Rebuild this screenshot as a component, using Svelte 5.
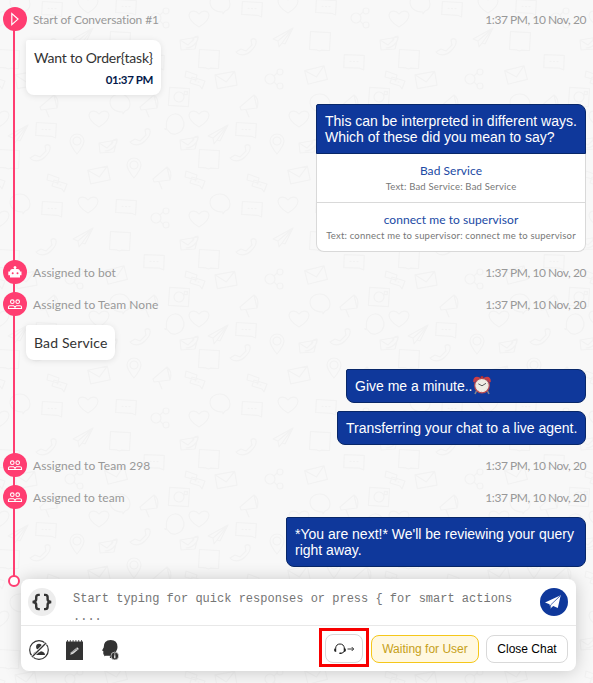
<script>
  const stamp = '1:37 PM, 10 Nov, 20';

  const timeline = [
    { kind: 'event', icon: 'play', label: 'Start of Conversation #1', top: 7, ls: -0.12 },
    { kind: 'in', text: 'Want to Order{task}', time: '01:37 PM', top: 9, width: 135, ls: -0.22 },
    {
      kind: 'out',
      lines: ['This can be interpreted in different ways.', 'Which of these did you mean to say?'],
      options: [
        { title: 'Bad Service', detail: 'Text: Bad Service: Bad Service' },
        { title: 'connect me to supervisor', detail: 'Text: connect me to supervisor: connect me to supervisor' }
      ],
      top: 9,
      width: 270
    },
    { kind: 'event', icon: 'bot', label: 'Assigned to bot', top: 8, ls: 0.03 },
    { kind: 'event', icon: 'team', label: 'Assigned to Team None', top: 8, ls: 0.07 },
    { kind: 'in', text: 'Bad Service', top: 9, width: 89, ls: 0.15 },
    { kind: 'out', lines: ['Give me a minute..'], clock: true, top: 9, width: 240 },
    { kind: 'out', lines: ['Transferring your chat to a live agent.'], top: 8, width: 249 },
    { kind: 'event', icon: 'team', label: 'Assigned to Team 298', top: 8, ls: 0.07 },
    { kind: 'event', icon: 'team', label: 'Assigned to team', top: 8, ls: 0.03 },
    { kind: 'out', lines: ["*You are next!* We'll be reviewing your query", 'right away.'], top: 8, width: 300 }
  ];

  // Wallpaper doodles: shape, centre x, centre y, rotation inside a 200px tile
  const doodles = [
    ['bubble', 4, 5, 0], ['horn', 33, 6, 0], ['camera', 63, 199, 4], ['horn', 133, 6, 0],
    ['heart', 83, 21, 0], ['bubble', 59, 26, 80], ['plane', 103, 36, 0], ['chat', 130, 32, 3],
    ['heart', 183, 21, 0], ['phone', 24, 39, 0], ['openmail', 73, 46, 0], ['phone', 124, 55, 0],
    ['pin', 161, 46, 0], ['openmail', 192, 49, 0], ['pin', 18, 70, 0], ['horn', 46, 78, 0],
    ['note', 93, 61, 3], ['double', 79, 82, 0], ['double', 141, 85, 0], ['mail', 183, 77, -12],
    ['bubble', 104, 105, 0], ['chat', 10, 109, 3], ['chat', 136, 111, 3], ['heart', 172, 107, 0],
    ['share', 44, 120, 0], ['heart', 83, 121, 0], ['note', 4, 143, 3], ['openmail', 73, 146, 0],
    ['phone', 130, 149, 0], ['plane', 168, 139, 0], ['chat', 38, 164, 2], ['note', 93, 161, 3],
    ['double', 79, 182, 0], ['mail', 110, 182, -10], ['mail', 0, 177, -14], ['share', 158, 181, 0]
  ];

  const shapes = {
    bubble: 'M3 9C-5 9-10 5-10-1C-10-6-5-9 0-9C6-9 10-4 10 1C10 4 8 7 5 8L3 11Z',
    horn: 'M-9 3L5-9L8 4L-8 6ZM-3 6L0 13M5-9C9-6 10-2 8 4',
    camera: 'M-10-9H10V9H-10ZM5-6H8V-3H5ZM5 0A5 5 0 1 1-5 0A5 5 0 1 1 5 0Z',
    heart: 'M0 8C-5 5-10 0-10-4C-9-9-3-9 0-5C3-9 9-9 10-4C10 0 5 5 0 8Z',
    plane: 'M9-9L-11 2L-6 4L-5 10L-2 6L1 7ZM-6 4L9-9L-2 6',
    chat: 'M-10-7H10V7.5L6 6H-10Z M-4-.5H-3M-.5-.5H.5M3-.5H4',
    phone: 'M-10 5C-7 9 0 9 5 4C9 0 11-4 10-7C8-9 6-8 5-7L6-2L0 4L-5 2Z',
    openmail: 'M-9-4L3-6L9-7L6 5L-8 6ZM-9-4L-1 1L5-5M-3 4C5 4 10-4 9-8C6-8 3-6 4-3',
    pin: 'M0 10C-4 5-7 1-7-3A7 7 0 0 1 7-3C7 1 4 5 0 10ZM4-3A4 4 0 1 1-4-3A4 4 0 1 1 4-3Z',
    note: 'M-10-9H10V9H2L0 10L-3 9H-10Z',
    double: 'M-9-9L2-5L1 0L-10-3ZM-3-3L10 1L7 9L5 6L-5 3ZM0 1H1M3 2H4',
    mail: 'M-10-7H10V7H-10ZM-10-7L0 2L10-7',
    share: 'M1 0A5 5 0 1 1-9 0A5 5 0 1 1 1 0ZM9-7A3 3 0 1 1 3-7A3 3 0 1 1 9-7ZM9 7A3 3 0 1 1 3 7A3 3 0 1 1 9 7ZM0-3L3-6M0 3L3 6'
  };

  // Shapes near a tile edge are repeated on the far side so the tile is seamless
  const tile = doodles.flatMap(([shape, x, y, r]) => {
    const xs = x < 14 ? [x, x + 200] : x > 186 ? [x, x - 200] : [x];
    const ys = y < 14 ? [y, y + 200] : y > 186 ? [y, y - 200] : [y];
    return xs.flatMap((px) => ys.map((py) => ({ d: shapes[shape], t: `translate(${px} ${py}) rotate(${r})` })));
  });
</script>

<div class="screen">
  <svg class="wallpaper" width="593" height="683" aria-hidden="true">
    <defs>
      <pattern id="doodles" x="116" y="98" width="200" height="200" patternUnits="userSpaceOnUse">
        {#each tile as s}
          <path d={s.d} transform={s.t} fill="none" stroke="#f2f2f2" stroke-width="1.2" stroke-linejoin="round" stroke-linecap="round" />
        {/each}
      </pattern>
    </defs>
    <rect width="593" height="683" fill="url(#doodles)" />
  </svg>

  <main class="feed">
    <div class="rail"></div>
    {#each timeline as item}
      {#if item.kind === 'event'}
        <div class="event" style="margin-top: {item.top}px">
          <span class="badge">
            {#if item.icon === 'play'}
              <svg width="24" height="24" viewBox="0 0 24 24"><path d="M8.800 6.500V17.700L15 12.100Z" fill="none" stroke="#fff" stroke-width="1.200" /></svg>
            {:else if item.icon === 'bot'}
              <svg width="24" height="24" viewBox="0 0 24 24">
                <path d="M11.400 9V6.600H12.600V9H14.500Q17 9 17 11.500H18.500V15.200H17V17.500H7V15.200H5.300V11.500H7Q7 9 9.500 9Z" fill="#fff" />
                <circle cx="12" cy="7.600" r="1.400" fill="#fff" />
                <circle cx="9.700" cy="13.300" r="1" fill="#ff3d71" /><circle cx="14.500" cy="13.300" r="1" fill="#ff3d71" />
              </svg>
            {:else}
              <svg width="24" height="24" viewBox="0 0 24 24" fill="none" stroke="#fff" stroke-width="1.100">
                <circle cx="9.300" cy="9.700" r="1.800" /><circle cx="14.700" cy="9.700" r="1.800" />
                <path d="M5.500 16.500V15Q5.500 13.700 7 13.700H10.500L12 15L13.500 13.700H17Q18.500 13.700 18.500 15V16.500ZM12 14.500V16.500" />
              </svg>
            {/if}
          </span>
          <span class="label" style="letter-spacing: {item.ls}px">{item.label}</span>
          <time>{stamp}</time>
        </div>
      {:else if item.kind === 'in'}
        <div class="incoming" style="margin-top: {item.top}px; width: {item.width}px">
          <p style="letter-spacing: {item.ls}px">{item.text}</p>
          {#if item.time}<time>{item.time}</time>{/if}
        </div>
      {:else}
        <div class="outgoing" class:with-options={item.options} style="margin-top: {item.top}px; width: {item.width}px">
          <div class="bubble">
            {#each item.lines as line}
              <p>{line}{#if item.clock}<svg class="clock" width="18" height="19" viewBox="0 0 18 19" role="img" aria-label="alarm clock">
                    <path d="M4 14L2 18M14 14L16 18" stroke="#82868b" stroke-width="1.6" />
                    <path d="M.3 6Q-.2 1 4 .7Q6.500 .8 7.500 2.200Q3 3.200 1.500 6.500ZM17.700 6Q18.200 1 14 .7Q11.500 .8 10.500 2.200Q15 3.200 16.500 6.500Z" fill="#cf3d44" />
                    <path d="M8 2V.4H10V2" stroke="#a22d35" fill="#df3843" />
                    <circle cx="9" cy="9.600" r="7.300" fill="#f0ece4" stroke="#b9484c" stroke-width="1.200" />
                    <circle cx="9" cy="9.600" r="6" fill="none" stroke="#b7b1a8" stroke-width=".8" stroke-dasharray=".6 2.540" />
                    <path d="M5.300 7.800L9 9.800L13 7.300" fill="none" stroke="#37393c" stroke-width=".8" />
                  </svg>{/if}</p>
            {/each}
          </div>
          {#each item.options ?? [] as option}
            <div class="option">
              <span class="title">{option.title}</span>
              <span class="detail">{option.detail}</span>
            </div>
          {/each}
        </div>
      {/if}
    {/each}
    <span class="rail-end"></span>
  </main>

  <section class="composer">
    <div class="entry">
      <span class="braces">
        <svg width="28" height="28" viewBox="0 0 28 28" fill="none" stroke="#333" stroke-width="2.400">
          <path d="M11.800 6.900H10.500Q8.200 6.900 8.200 9.200V11.300Q8.200 13.700 4.600 14Q8.200 14.300 8.200 16.700V18.800Q8.200 21.100 10.500 21.100H11.800M16 6.900H17.300Q19.600 6.900 19.600 9.200V11.300Q19.600 13.700 23.200 14Q19.600 14.300 19.600 16.700V18.800Q19.600 21.100 17.300 21.100H16" />
        </svg>
      </span>
      <p class="prompt">Start typing for quick responses or press &#123; for smart actions<br />....</p>
      <span class="send">
        <svg width="28" height="28" viewBox="0 0 28 28">
          <path d="M20.700 7.200L5 14.500L9.500 16.300ZM20.700 7.200L10.500 16.800V20.600L13.200 17.900L17.800 19.900ZM20.700 7.200L9.500 16.300L10.500 20.600Z" fill="#fff" />
          <path d="M20 8L10.600 17V20" fill="none" stroke="#0f389b" stroke-width=".7" />
        </svg>
      </span>
    </div>

    <div class="tools">
      <svg class="tool" width="20" height="20" viewBox="0 0 20 20">
        <circle cx="10" cy="10" r="9.300" fill="none" stroke="#333" stroke-width="1.200" />
        <circle cx="10" cy="6.700" r="2.900" fill="#333" />
        <path d="M4 15Q4.200 11.800 8 11.200L10 12.500L12 11.200Q15.800 11.800 16 15Z" fill="#333" />
        <path d="M3.200 16.800L16.800 3.200" stroke="#fff" stroke-width="3" />
        <path d="M3.200 16.800L16.800 3.200" stroke="#333" stroke-width="1.300" />
      </svg>
      <svg class="tool pad" width="17" height="20" viewBox="0 0 17 20">
        <path d="M0 1.500H17V20H0Z" fill="#333" />
        <path d="M1.500 0V2M4.300 0V2M7.100 0V2M9.900 0V2M12.700 0V2M15.500 0V2" stroke="#333" stroke-width=".8" />
        <path d="M4.200 14.700L5.100 12.300L11.200 7.300L12.900 9L6.900 13.900Z" fill="#d7d7d7" /><path d="M10 8.200L11.700 10M5.500 12.500L11 8.800" stroke="#333" stroke-width=".4" />
      </svg>
      <svg class="tool head" width="17" height="20" viewBox="0 0 17 20">
        <path d="M2.200 16.500V14.800Q1.300 14.900 1.300 13.800V11L0 10.400L1.700 7.500Q1.500 .2 8.700 0Q15.500 .2 15.500 6.900Q15.500 9.300 14.300 11L12 18H7.900V15.800H3.700Q2.200 15.800 2.200 16.500Z" fill="#333" />
        <circle cx="12.800" cy="16" r="3.900" fill="#333" stroke="#fff" stroke-width=".6" />
        <path d="M12.800 13.600V14.600M12.800 15.300V18.200" stroke="#fff" stroke-width="1.200" />
      </svg>

      <div class="actions">
        <button class="transfer" aria-label="Transfer">
          <svg width="22" height="12" viewBox="0 0 22 12">
            <path d="M2.600 5.200Q3.200 1 7 1Q10.800 1 11.400 5.200V7.800Q11 10 7.800 10.400" fill="none" stroke="#222" stroke-width="1" />
            <path d="M3.200 5V9Q1 9 1 7Q1 5 3.200 5ZM10.800 5V9Q13 9 13 7Q13 5 10.800 5Z" fill="#222" />
            <rect x="6.200" y="9.600" width="2.300" height="1.400" rx=".7" fill="#222" />
            <path d="M14.500 6H20.500M18.700 4L20.700 6L18.700 8" fill="none" stroke="#222" stroke-width=".9" />
          </svg>
          <span class="highlight"></span>
        </button>
        <button class="waiting">Waiting for User</button>
        <button class="close">Close Chat</button>
      </div>
    </div>
  </section>
</div>

<style>
  :global(body) { background: #f8f8f8; }
  .screen {
    position: relative;
    width: 593px;
    height: 683px;
    overflow: hidden;
    background: #f8f8f8;
    font-family: Lato, 'Liberation Sans', sans-serif;
    display: flex;
    flex-direction: column;
  }
  .screen * { box-sizing: border-box; }
  p { margin: 0; white-space: nowrap; }
  .wallpaper { position: absolute; left: 0; top: 0; }
  .feed {
    position: relative;
    height: 579px;
    flex: none;
    padding: 0 7px 0 3px;
    display: flex;
    flex-direction: column;
  }
  .rail { position: absolute; left: 13px; top: 19px; width: 2px; height: 557px; background: #ff3d71; }
  .rail-end {
    position: absolute;
    left: 8px;
    top: 575px;
    width: 12px;
    height: 12px;
    border: 2px solid #ff3d71;
    border-radius: 50%;
    background: #fff;
    z-index: 3;
  }
  .event { display: flex; align-items: center; height: 24px; font-size: 12px; color: #989898; position: relative; flex: none; }
  .badge { width: 24px; height: 24px; border-radius: 50%; background: #ff3d71; flex: none; }
  .badge svg { display: block; }
  .label { margin-left: 6px; padding-top: 1px; }
  .event time { margin-left: auto; padding-top: 1px; letter-spacing: -0.45px; }
  .incoming {
    margin-left: 23px;
    padding: 8px 8px 7px;
    border-radius: 2px 8px 8px 8px;
    background: #fff;
    box-shadow: 0 1px 6px rgba(0, 0, 0, 0.1);
    font-size: 14px;
    line-height: 19px;
    color: #333;
    position: relative;
    flex: none;
    min-height: 35px;
  }
  .incoming time { display: block; text-align: right; font-size: 11.5px; font-weight: 700; color: #04194a; letter-spacing: -0.4px; line-height: 16px; margin-top: 5px; }
  .outgoing { align-self: flex-end; position: relative; flex: none; }
  .bubble {
    padding: 8px;
    border: 1px solid #082769;
    border-radius: 2px 8px 8px 8px;
    background: #0f389b;
    color: #fff;
    font: 14px/16px 'Liberation Sans', Arial, sans-serif;
  }
  .bubble p { height: 16px; display: flex; align-items: center; }
  .clock { flex: none; margin-top: -2px; }
  .with-options .bubble { border-radius: 2px 8px 0 0; }
  .option {
    height: 49px;
    display: flex;
    flex-direction: column;
    align-items: center;
    padding-top: 8px;
    background: #fff;
    border: 1px solid #d9d9d9;
    border-top: 0;
    white-space: nowrap;
  }
  .option:last-child { border-radius: 0 0 8px 8px; }
  .title { font-size: 12px; line-height: 17px; color: #2049a4; letter-spacing: 0.05px; }
  .detail { font-size: 9.5px; line-height: 16px; color: #777; letter-spacing: 0.2px; }
  .composer {
    position: relative;
    width: 555px;
    height: 92px;
    margin-left: 21px;
    border-radius: 8px;
    background: #fff;
    box-shadow: 0 1px 18px rgba(0, 0, 0, 0.2);
    flex: none;
  }
  .entry { height: 47px; display: flex; padding: 9px 8px 0 7px; border-bottom: 1px solid #e8e8e8; }
  .braces, .send { width: 28px; height: 28px; border-radius: 50%; background: #ededed; flex: none; }
  .send { margin-left: auto; background: #0f389b; }
  .braces svg, .send svg { display: block; }
  .prompt { margin-left: 17px; padding-top: 2px; font: 12px/18px 'Liberation Mono', 'Courier New', monospace; color: #757575; }
  .tools { height: 45px; display: flex; align-items: center; padding: 3px 8px; }
  .tool { flex: none; margin-top: 2px; }
  .pad { margin-left: 17px; }
  .head { margin-left: 19px; }
  .actions { margin-left: auto; display: flex; align-items: center; }
  button {
    height: 28px;
    border: 1px solid #d9d9d9;
    border-radius: 8px;
    padding: 0;
    background: #fff;
    color: #000;
    font: 12px 'Liberation Sans', Arial, sans-serif;
    white-space: nowrap;
    margin: 1px 0 0;
  }
  .transfer { position: relative; width: 38px; height: 29px; margin-top: 0; display: flex; align-items: center; justify-content: center; }
  .highlight { position: absolute; left: -7px; top: -7px; width: 50px; height: 39px; border: 3px solid #f80000; }
  .waiting { width: 108px; margin-left: 8px; border-color: #f5c71a; background: #fff8e1; color: #c6a019; }
  .close { width: 82px; margin-left: 7px; }
</style>
